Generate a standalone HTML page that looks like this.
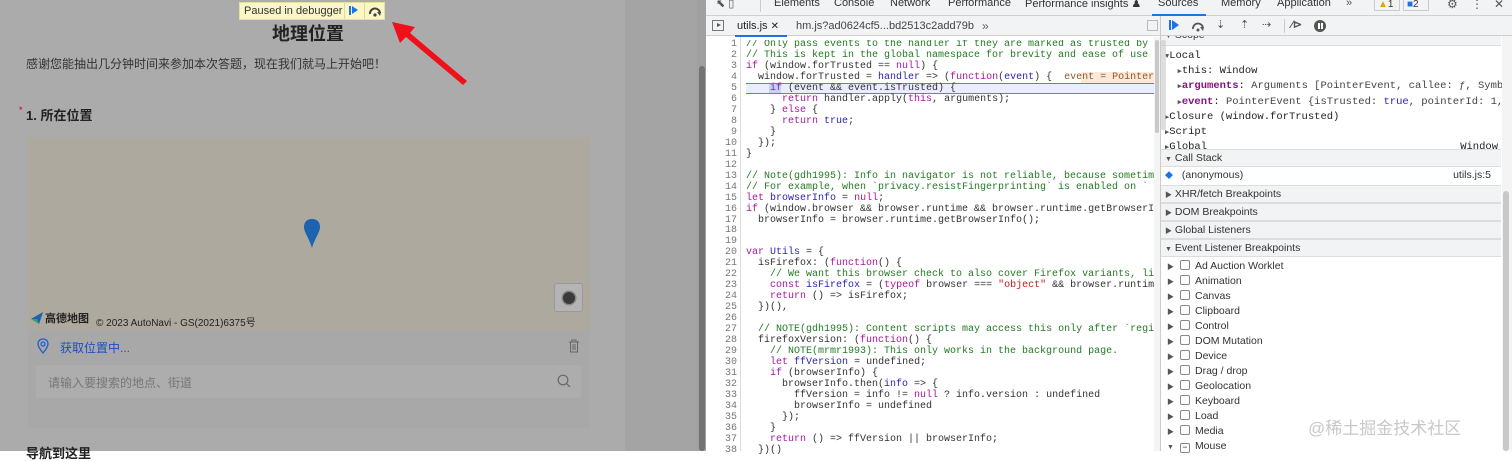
<!DOCTYPE html>
<html><head><meta charset="utf-8"><style>
*{margin:0;padding:0;box-sizing:border-box}
body{width:1512px;height:451px;overflow:hidden;position:relative;background:#fff;font-family:"Liberation Sans","Noto Sans CJK SC",sans-serif}
.abs{position:absolute}
#left{left:0;top:0;width:706px;height:451px;background:#ababab}
.cn{font-family:"Liberation Sans","Noto Sans CJK SC",sans-serif}
#dt{left:706px;top:0;width:806px;height:451px;background:#fff;font-size:11px;color:#333}
.code{font-family:"Liberation Mono","DejaVu Sans Mono",monospace;font-size:10px;white-space:pre;line-height:10.97px}
.c{color:#237a23}.k{color:#a8159f}.v{color:#2a22b8}.s{color:#c41a16}
.ln{color:#777;text-align:right;width:31px}
.mono{font-family:"Liberation Mono","DejaVu Sans Mono",monospace;font-size:10px}
.sec{background:#f1f3f4;border-top:1px solid #ddd;border-bottom:1px solid #ddd;height:18px;line-height:17px;padding-left:4px;font-size:10.5px;color:#333;width:340px}
.item{height:15px;line-height:15px;font-size:10.5px;color:#333}
.cb{display:inline-block;width:10px;height:10px;border:1px solid #888;border-radius:2px;vertical-align:-1px;margin:0 5px 0 6px}
.tri{font-size:7px;color:#555}
</style></head><body>
<div id="left" class="abs">
  <div class="abs" style="left:625px;top:0;width:72px;height:451px;background:#a4a4a4"></div>
  <div class="abs" style="left:697px;top:0;width:9px;height:451px;background:#a0a0a0"></div>
  <div class="abs" style="left:699px;top:66px;width:6px;height:385px;background:#737373;border-radius:3px"></div>
  <div class="abs" style="left:239px;top:2px;width:146px;height:18px;background:#fbf7c5;border:1px solid #e6e0a0;font-size:11px;color:#333;line-height:16px;padding-left:4px">Paused in debugger</div>
  <div class="abs" style="left:344px;top:3px;width:1px;height:16px;background:#e0da9a"></div>
  <div class="abs" style="left:364px;top:3px;width:1px;height:16px;background:#e0da9a"></div>
  <div class="abs" style="left:349px;top:6px;width:2px;height:9px;background:#1a73e8"></div>
  <div class="abs" style="left:352px;top:6px;width:0;height:0;border-top:4.5px solid transparent;border-bottom:4.5px solid transparent;border-left:6px solid #1a73e8"></div>
  <svg class="abs" style="left:367px;top:4px" width="16" height="14"><path d="M3 10 A5 5 0 0 1 13 9" stroke="#444" stroke-width="2" fill="none"/><path d="M10 8 L14 8 L13 12 Z" fill="#444"/><circle cx="8" cy="11" r="1.6" fill="#444"/></svg>
  <svg class="abs" style="left:385px;top:15px" width="90" height="80"><path d="M7 7 L30 12 L25 18 L82 66 L78 70 L21 22 L15 28 Z" fill="#f0101a"/></svg>
  <div class="abs cn" style="left:272px;top:20px;font-size:18px;font-weight:bold;color:#222">地理位置</div>
  <div class="abs cn" style="left:26px;top:55px;font-size:12px;color:#333">感谢您能抽出几分钟时间来参加本次答题，现在我们就马上开始吧！</div>
  <div class="abs cn" style="left:19px;top:105px;font-size:9px;color:#c00">*</div>
  <div class="abs cn" style="left:26px;top:105px;font-size:13px;color:#222;font-weight:bold">1. 所在位置</div>
  <div class="abs" style="left:28px;top:137px;width:562px;height:193px;background:#ada99f"></div>
  <div class="abs" style="left:28px;top:330px;width:562px;height:98px;background:#a8a8a8"></div>
  <svg class="abs" style="left:303px;top:218px" width="18" height="32"><path d="M9 1 C3 1 1 5 1 9 C1 14 6 20 9 30 C12 20 17 14 17 9 C17 5 15 1 9 1 Z" fill="#1d63b0"/></svg>
  <div class="abs" style="left:554px;top:283px;width:29px;height:29px;background:#b4b4b4;border:1px solid #999;border-radius:3px"></div>
  <div class="abs" style="left:563px;top:292px;width:12px;height:12px;border-radius:50%;background:#3a3a3a;box-shadow:0 0 0 1.5px #888"></div>
  <svg class="abs" style="left:30px;top:311px" width="14" height="14"><path d="M13 1 L1 8 L7 8 L9 13 Z" fill="#1a5fb0"/><path d="M1 8 L7 8 L9 13 Z" fill="#2aa07a"/></svg>
  <div class="abs cn" style="left:45px;top:310px;font-size:11px;font-weight:bold;color:#222">高德地图</div>
  <div class="abs cn" style="left:96px;top:314px;font-size:10px;color:#222">© 2023 AutoNavi - GS(2021)6375号</div>
  <svg class="abs" style="left:37px;top:338px" width="12" height="16"><path d="M6 1 C3 1 1 3 1 6 C1 9 6 15 6 15 C6 15 11 9 11 6 C11 3 9 1 6 1 Z" stroke="#1d5fd0" stroke-width="1.3" fill="none"/><circle cx="6" cy="6" r="2" stroke="#1d5fd0" stroke-width="1.2" fill="none"/></svg>
  <div class="abs cn" style="left:60px;top:339px;font-size:12px;color:#1d4fbf">获取位置中...</div>
  <svg class="abs" style="left:568px;top:339px" width="12" height="14"><path d="M1 3 H11 M4 3 V1 H8 V3 M2.5 3 V13 H9.5 V3 M5 5 V11 M7 5 V11" stroke="#666" stroke-width="1" fill="none"/></svg>
  <div class="abs" style="left:36px;top:365px;width:545px;height:33px;background:#adadad;border-radius:2px"></div>
  <div class="abs cn" style="left:48px;top:374px;font-size:12px;color:#777">请输入要搜索的地点、街道</div>
  <svg class="abs" style="left:557px;top:374px" width="14" height="14"><circle cx="6" cy="6" r="4.8" stroke="#666" stroke-width="1.2" fill="none"/><path d="M9.5 9.5 L13 13" stroke="#666" stroke-width="1.2"/></svg>
  <div class="abs cn" style="left:26px;top:443px;font-size:13px;color:#222;font-weight:bold">导航到这里</div>
</div>

<div id="dt" class="abs">
  <div class="abs" style="left:0;top:0;width:806px;height:16px;background:#f1f3f4;border-bottom:1px solid #d0d0d0"></div>
  <div class="abs" style="left:54px;top:0;width:1px;height:12px;background:#ccc"></div>
  <div class="abs" style="left:10px;top:-3px;font-size:11px;color:#555">⬉ ▯</div>
  <div class="abs" style="left:68px;top:-3px;font-size:11px;color:#333">Elements</div>
  <div class="abs" style="left:128px;top:-3px;font-size:11px;color:#333">Console</div>
  <div class="abs" style="left:184px;top:-3px;font-size:11px;color:#333">Network</div>
  <div class="abs" style="left:242px;top:-3px;font-size:11px;color:#333">Performance</div>
  <div class="abs" style="left:319px;top:-3px;font-size:11px;color:#333">Performance insights ♟</div>
  <div class="abs" style="left:452px;top:-3px;font-size:11px;color:#333">Sources</div>
  <div class="abs" style="left:446px;top:14px;width:54px;height:2px;background:#1a73e8"></div>
  <div class="abs" style="left:515px;top:-3px;font-size:11px;color:#333">Memory</div>
  <div class="abs" style="left:571px;top:-3px;font-size:11px;color:#333">Application</div>
  <div class="abs" style="left:640px;top:-3px;font-size:11px;color:#555">»</div>
  <div class="abs" style="left:668px;top:-2px;width:26px;height:13px;border:1px solid #ccc;font-size:10px;line-height:11px;padding-left:3px;color:#333"><span style="color:#e8a400">▲</span>1</div>
  <div class="abs" style="left:697px;top:-2px;width:26px;height:13px;border:1px solid #ccc;font-size:10px;line-height:11px;padding-left:3px;color:#333"><span style="color:#1a73e8">■</span>2</div>
  <div class="abs" style="left:741px;top:-3px;font-size:12px;color:#555">⚙</div>
  <div class="abs" style="left:765px;top:-3px;font-size:12px;color:#555">⋮</div>
  <div class="abs" style="left:788px;top:-3px;font-size:12px;color:#555">✕</div>

  <div class="abs" style="left:0;top:16px;width:454px;height:20px;background:#f1f3f4;border-bottom:1px solid #d0d0d0"></div>
  <div class="abs" style="left:6px;top:20px;width:12px;height:11px;border:1px solid #777"></div>
  <div class="abs" style="left:11px;top:23px;width:0;height:0;border-top:2.5px solid transparent;border-bottom:2.5px solid transparent;border-left:4px solid #555"></div>
  <div class="abs" style="left:31px;top:20px;font-size:11px;color:#222">utils.js <span style="font-size:10px">✕</span></div>
  <div class="abs" style="left:29px;top:35px;width:52px;height:2px;background:#1a73e8"></div>
  <div class="abs" style="left:90px;top:20px;font-size:11px;color:#444">hm.js?ad0624cf5...bd2513c2add79b</div>
  <div class="abs" style="left:276px;top:19px;font-size:12px;color:#666">»</div>
  <div class="abs" style="left:441px;top:20px;width:11px;height:11px;border:1px solid #bbb"></div>

  <div class="abs" style="left:34px;top:37px;width:1px;height:414px;background:#ddd"></div>
  <div class="abs" style="left:40px;top:83px;width:408px;height:11px;background:#e8eefc;border-top:1px solid #4a84e8;border-bottom:1px solid #4a84e8"></div>
  <div class="abs" style="left:375px;top:72px;width:73px;height:11px;background:#fce8d8"></div>
  <div class="abs" style="left:63px;top:84px;width:12px;height:9px;background:#c3d3f5"></div>
  <div class="abs code ln" style="left:0;top:40px"> 1
 2
 3
 4
 5
 6
 7
 8
 9
10
11
12
13
14
15
16
17
18
19
20
21
22
23
24
25
26
27
28
29
30
31
32
33
34
35
36
37
38</div>
  <div class="abs code" style="left:40px;top:40px;width:408px;overflow:hidden"><span class="c">// Only pass events to the handler if they are marked as trusted by</span>
<span class="c">// This is kept in the global namespace for brevity and ease of use</span>
<span class="k">if</span> (window.forTrusted == <span class="k">null</span>) {
  window.forTrusted = <span class="v">handler</span> =&gt; (<span class="k">function</span>(<span class="v">event</span>) {  <span style="color:#8a5a2a">event = PointerEvent</span>
    <span class="k">if</span> (event &amp;&amp; event.isTrusted) {
      <span class="k">return</span> handler.apply(<span class="k">this</span>, arguments);
    } <span class="k">else</span> {
      <span class="k">return</span> <span class="v">true</span>;
    }
  });
}

<span class="c">// Note(gdh1995): Info in navigator is not reliable, because sometimes</span>
<span class="c">// For example, when `privacy.resistFingerprinting` is enabled on `</span>
<span class="k">let</span> <span class="v">browserInfo</span> = <span class="k">null</span>;
<span class="k">if</span> (window.browser &amp;&amp; browser.runtime &amp;&amp; browser.runtime.getBrowserInfo
  browserInfo = browser.runtime.getBrowserInfo();


<span class="k">var</span> <span class="v">Utils</span> = {
  isFirefox: (<span class="k">function</span>() {
    <span class="c">// We want this browser check to also cover Firefox variants, like</span>
    <span class="k">const</span> <span class="v">isFirefox</span> = (<span class="k">typeof</span> browser === <span class="s">"object"</span> &amp;&amp; browser.runtime
    <span class="k">return</span> () =&gt; isFirefox;
  })(),

  <span class="c">// NOTE(gdh1995): Content scripts may access this only after `registered</span>
  firefoxVersion: (<span class="k">function</span>() {
    <span class="c">// NOTE(mrmr1993): This only works in the background page.</span>
    <span class="k">let</span> <span class="v">ffVersion</span> = undefined;
    <span class="k">if</span> (browserInfo) {
      browserInfo.then(<span class="v">info</span> =&gt; {
        ffVersion = info != <span class="k">null</span> ? info.version : undefined
        browserInfo = undefined
      });
    }
    <span class="k">return</span> () =&gt; ffVersion || browserInfo;
  })()</div>
  <div class="abs" style="left:448px;top:37px;width:6px;height:414px;background:#f4f4f4"></div>
  <div class="abs" style="left:449px;top:40px;width:4px;height:93px;background:#c8c8c8;border-radius:2px"></div>
  <div class="abs" style="left:454px;top:16px;width:1px;height:435px;background:#ccc"></div>

  <div class="abs" style="left:455px;top:16px;width:351px;height:20px;background:#f1f3f4;border-bottom:1px solid #d0d0d0"></div>
  <div class="abs" style="left:463px;top:20px;width:2px;height:10px;background:#1a73e8"></div>
  <div class="abs" style="left:466px;top:20px;width:0;height:0;border-top:5px solid transparent;border-bottom:5px solid transparent;border-left:7px solid #1a73e8"></div>
  <svg class="abs" style="left:484px;top:19px" width="16" height="14"><path d="M3 10 A5 5 0 0 1 13 9" stroke="#555" stroke-width="1.8" fill="none"/><path d="M10 8 L14 8 L13 12 Z" fill="#555"/><circle cx="8" cy="11" r="1.5" fill="#555"/></svg>
  <div class="abs" style="left:510px;top:18px;font-size:11px;color:#555">⇣</div>
  <div class="abs" style="left:534px;top:18px;font-size:11px;color:#555">⇡</div>
  <div class="abs" style="left:556px;top:18px;font-size:11px;color:#555">⇢</div>
  <div class="abs" style="left:578px;top:19px;width:1px;height:14px;background:#ccc"></div>
  <div class="abs" style="left:585px;top:18px;font-size:11px;color:#555;font-weight:bold">⁄⊳</div>
  <div class="abs" style="left:608px;top:20px;width:12px;height:12px;border-radius:50%;background:#555"></div>
  <div class="abs" style="left:612px;top:23px;width:1.5px;height:6px;background:#fff"></div>
  <div class="abs" style="left:615px;top:23px;width:1.5px;height:6px;background:#fff"></div>

  <div class="abs" style="left:455px;top:36px;width:340px;height:10px;overflow:hidden;background:#f1f3f4;border-bottom:1px solid #ddd"><div style="font-size:10.5px;margin-top:-7px;padding-left:4px;color:#333"><span class="tri">▼</span> Scope</div></div>
  <div class="abs mono" style="left:459px;top:49px;line-height:14.2px;color:#222;white-space:pre;width:337px;overflow:hidden;font-size:10.5px"><span class="tri">▼</span>Local
  <span class="tri">▶</span>this: Window
  <span class="tri">▶</span><b style="color:#881280">arguments</b>: <span style="color:#444">Arguments [PointerEvent, callee: ƒ, Symbol(</span>
  <span class="tri">▶</span><b style="color:#881280">event</b>: <span style="color:#444">PointerEvent {isTrusted: <span class="v">true</span>, pointerId: 1, wi</span>
<span class="tri">▶</span>Closure (window.forTrusted)
<span class="tri">▶</span>Script
<span class="tri">▶</span>Global<span style="position:absolute;right:4px">Window</span></div>
  <div class="abs sec" style="left:455px;top:149px"><span class="tri">▼</span> Call Stack</div>
  <div class="abs item" style="left:455px;top:168px;width:340px"><span style="color:#1a73e8;font-size:8px;margin-left:4px">◆</span> <span style="margin-left:6px">(anonymous)</span><span style="position:absolute;right:10px">utils.js:5</span></div>
  <div class="abs sec" style="left:455px;top:185px"><span class="tri">▶</span> XHR/fetch Breakpoints</div>
  <div class="abs sec" style="left:455px;top:203px"><span class="tri">▶</span> DOM Breakpoints</div>
  <div class="abs sec" style="left:455px;top:221px"><span class="tri">▶</span> Global Listeners</div>
  <div class="abs sec" style="left:455px;top:239px"><span class="tri">▼</span> Event Listener Breakpoints</div>
  <div class="abs" style="left:461px;top:259px">
    <div class="item"><span class="tri">▶</span><span class="cb"></span>Ad Auction Worklet</div>
    <div class="item"><span class="tri">▶</span><span class="cb"></span>Animation</div>
    <div class="item"><span class="tri">▶</span><span class="cb"></span>Canvas</div>
    <div class="item"><span class="tri">▶</span><span class="cb"></span>Clipboard</div>
    <div class="item"><span class="tri">▶</span><span class="cb"></span>Control</div>
    <div class="item"><span class="tri">▶</span><span class="cb"></span>DOM Mutation</div>
    <div class="item"><span class="tri">▶</span><span class="cb"></span>Device</div>
    <div class="item"><span class="tri">▶</span><span class="cb"></span>Drag / drop</div>
    <div class="item"><span class="tri">▶</span><span class="cb"></span>Geolocation</div>
    <div class="item"><span class="tri">▶</span><span class="cb"></span>Keyboard</div>
    <div class="item"><span class="tri">▶</span><span class="cb"></span>Load</div>
    <div class="item"><span class="tri">▶</span><span class="cb"></span>Media</div>
    <div class="item"><span class="tri">▼</span><span class="cb" style="text-align:center;line-height:7px;font-size:9px">−</span>Mouse</div>
  </div>
  <div class="abs cn" style="left:602px;top:414px;font-size:17px;color:#c8c8c8">@稀土掘金技术社区</div>
  <div class="abs" style="left:796px;top:36px;width:10px;height:415px;background:#f4f4f4"></div>
  <div class="abs" style="left:797px;top:191px;width:6px;height:260px;background:#c8c8c8;border-radius:3px"></div>
  <div class="abs" style="left:455px;top:40px;width:5px;height:90px;background:#c8c8c8;border-radius:2px;opacity:.6"></div>
</div>
</body></html>
